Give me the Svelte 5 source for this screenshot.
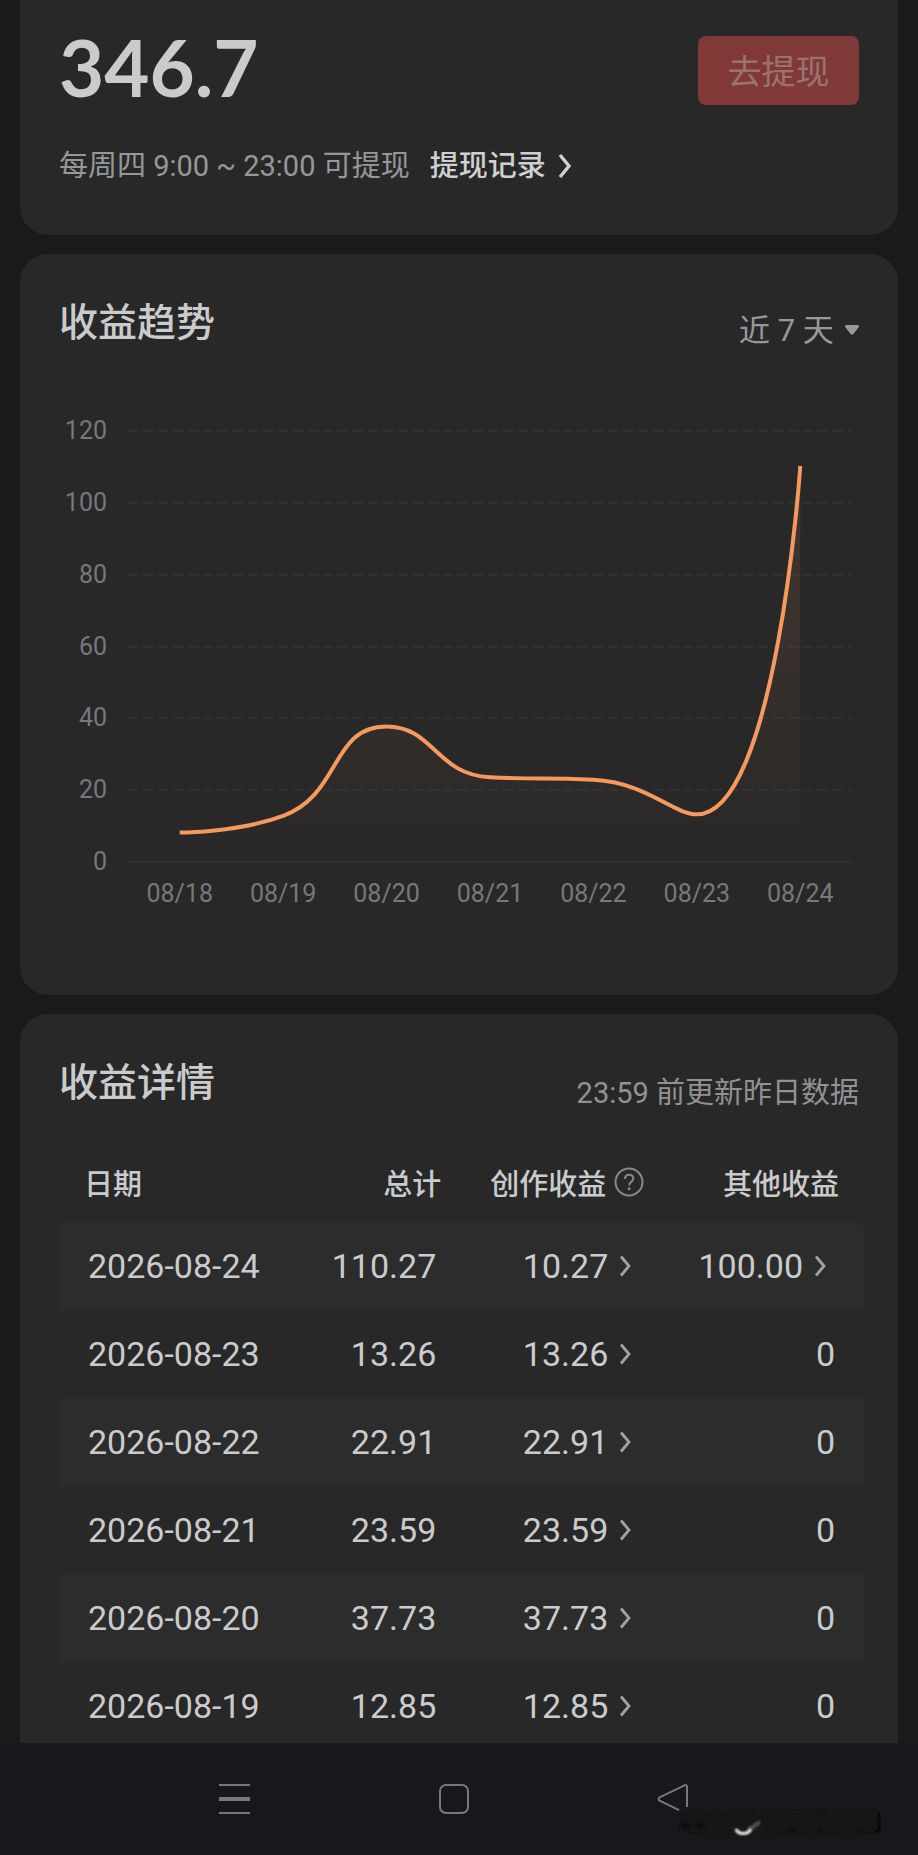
<script lang="ts">
	type Row = {
		date: string;
		total: string;
		creation: string;
		other: string;
	};

	type Point = { x: number; y: number };

	const rows: Row[] = [
		{ date: '2026-08-24', total: '110.27', creation: '10.27', other: '100.00' },
		{ date: '2026-08-23', total: '13.26', creation: '13.26', other: '0' },
		{ date: '2026-08-22', total: '22.91', creation: '22.91', other: '0' },
		{ date: '2026-08-21', total: '23.59', creation: '23.59', other: '0' },
		{ date: '2026-08-20', total: '37.73', creation: '37.73', other: '0' },
		{ date: '2026-08-19', total: '12.85', creation: '12.85', other: '0' }
	];

	const trend = [
		{ day: '08/18', value: 8.2 },
		{ day: '08/19', value: 12.85 },
		{ day: '08/20', value: 37.73 },
		{ day: '08/21', value: 23.59 },
		{ day: '08/22', value: 22.91 },
		{ day: '08/23', value: 13.26 },
		{ day: '08/24', value: 110.27 }
	];

	const ticks = [120, 100, 80, 60, 40, 20, 0];

	// Plot area inside the chart's viewBox
	const left = 69;
	const right = 793;
	const top = 32;
	const bottom = 463;
	const band = (right - left) / trend.length;

	let range = $state('7');

	function yOf(value: number) {
		return bottom - (value / 120) * (bottom - top);
	}

	const points: Point[] = trend.map((d, i) => ({
		x: left + band * (i + 0.5),
		y: yOf(d.value)
	}));

	function clamp(v: number, a: number, b: number) {
		return Math.min(Math.max(v, Math.min(a, b)), Math.max(a, b));
	}

	// Bezier through all points, control points never overshoot their neighbours
	function smoothPath(pts: Point[], smooth = 0.5) {
		let d = `M${pts[0].x} ${pts[0].y}`;
		let out = pts[0];

		for (let i = 1; i < pts.length; i++) {
			const prev = pts[i - 1];
			const p = pts[i];
			const next = pts[i + 1];
			let into = p;
			let nextOut = p;

			if (next) {
				const lenPrev = Math.hypot(p.x - prev.x, p.y - prev.y);
				const lenNext = Math.hypot(next.x - p.x, next.y - p.y);
				const ratio = lenNext / (lenPrev + lenNext);

				nextOut = {
					x: clamp(p.x + (next.x - prev.x) * smooth * ratio, p.x, next.x),
					y: clamp(p.y + (next.y - prev.y) * smooth * ratio, p.y, next.y)
				};
				into = {
					x: clamp(p.x - ((nextOut.x - p.x) * lenPrev) / lenNext, prev.x, p.x),
					y: clamp(p.y - ((nextOut.y - p.y) * lenPrev) / lenNext, prev.y, p.y)
				};
				nextOut = {
					x: p.x + ((p.x - into.x) * lenNext) / lenPrev,
					y: p.y + ((p.y - into.y) * lenNext) / lenPrev
				};
			}

			d += ` C${out.x} ${out.y} ${into.x} ${into.y} ${p.x} ${p.y}`;
			out = nextOut;
		}

		return d;
	}

	const line = smoothPath(points);
	const area = `${line} V${bottom} H${points[0].x} Z`;
</script>

{#snippet amount(value: string)}
	<a class="amount" href="#detail">
		{value}
		<svg width="12" height="24" viewBox="0 0 12 24" fill="none" aria-hidden="true">
			<path d="M2 2.500 10 12 2 21.500" stroke="#a2a2a5" stroke-width="2.800" />
		</svg>
	</a>
{/snippet}

<div class="screen">
	<main>
		<section class="card balance">
			<div class="balance-row">
				<strong>346.7</strong>
				<button class="withdraw" disabled>去提现</button>
			</div>
			<p>
				每周四 9:00 ~ 23:00 可提现
				<a href="#records">
					提现记录
					<svg width="14" height="26" viewBox="0 0 14 26" fill="none" aria-hidden="true">
						<path d="M2 2 11 13 2 24" stroke="#cfd0d2" stroke-width="3.400" />
					</svg>
				</a>
			</p>
		</section>

		<section class="card trend">
			<header>
				<h2>收益趋势</h2>
				<label class="range">
					<select aria-label="收益趋势" bind:value={range}>
						<option value="7">近 7 天</option>
					</select>
					<svg width="14" height="10" viewBox="0 0 14 10" aria-hidden="true">
						<path
							d="M1.500 0h11c1.400 0 2 1.400 1 2.400L8.400 9c-.8.900-2 .9-2.800 0L.5 2.400C-.5 1.400.1 0 1.500 0z"
							fill="#98989b"
						/>
					</svg>
				</label>
			</header>

			<svg class="chart" viewBox="0 0 800 541" role="img" aria-label="收益趋势">
				<defs>
					<linearGradient id="fill" x1="0" y1="0" x2="0" y2="1">
						<stop offset="0" stop-color="#ff9a5c" stop-opacity="0.13" />
						<stop offset="1" stop-color="#ff9a5c" stop-opacity="0" />
					</linearGradient>
				</defs>
				{#each ticks as tick}
					<line
						class="grid"
						class:dashed={tick > 0}
						x1={left}
						x2={right}
						y1={Math.round(yOf(tick))}
						y2={Math.round(yOf(tick))}
					/>
					<text x="48" y={Math.round(yOf(tick)) + 8} text-anchor="end">{tick}</text>
				{/each}
				{#each trend as item, i}
					<text x={points[i].x} y="503" text-anchor="middle">{item.day}</text>
				{/each}
				<path d={area} fill="url(#fill)" />
				<path d={line} fill="none" stroke="#f5995f" stroke-width="4" />
			</svg>
		</section>

		<section class="card details">
			<header>
				<h2>收益详情</h2>
				<span class="note">23:59 前更新昨日数据</span>
			</header>

			<table>
				<thead>
					<tr>
						<th>日期</th>
						<th>总计</th>
						<th>
							<span class="with-help">
								创作收益
								<svg width="30" height="30" viewBox="0 0 30 30" fill="none" aria-hidden="true">
									<circle cx="15" cy="15" r="13.500" stroke="#88888b" stroke-width="2" />
									<path
										d="M11 12c0-2.600 1.700-4.200 4.200-4.200s4.100 1.600 4.100 3.800c0 3-4.100 3.400-4.100 6.800"
										stroke="#88888b"
										stroke-width="2"
									/>
									<circle cx="15.200" cy="21.700" r="1.500" fill="#88888b" />
								</svg>
							</span>
						</th>
						<th>其他收益</th>
					</tr>
				</thead>
				<tbody>
					{#each rows as row}
						<tr>
							<td>{row.date}</td>
							<td>{row.total}</td>
							<td>{@render amount(row.creation)}</td>
							<td class:linked={row.other !== '0'}>
								{#if row.other === '0'}
									0
								{:else}
									{@render amount(row.other)}
								{/if}
							</td>
						</tr>
					{/each}
				</tbody>
			</table>
		</section>
	</main>

	<nav>
		<button aria-label="菜单">
			<svg width="32" height="32" viewBox="0 0 32 32" fill="none" stroke="#77787b">
				<path d="M0 2h31M0 30h31" stroke-width="2" />
				<path d="M0 16h31" stroke-width="4" />
			</svg>
		</button>
		<button aria-label="主页">
			<svg width="32" height="32" viewBox="0 0 32 32" fill="none" stroke="#77787b">
				<rect x="2" y="2" width="28" height="28" rx="6" stroke-width="2" />
			</svg>
		</button>
		<button aria-label="返回">
			<svg width="32" height="32" viewBox="0 0 32 32" fill="none" stroke="#77787b">
				<path
					d="M22 27.200 2.600 17.600c-1.400-.8-1.400-2.400 0-3.200L27.500 2.300c1.500-.6 2.500 0 2.500 1.500V24"
					stroke-width="2"
				/>
			</svg>
		</button>
		<svg class="smudge" width="212" height="36" viewBox="0 0 212 36" aria-hidden="true">
			<defs>
				<filter id="soft" x="-20%" y="-50%" width="140%" height="200%">
					<feGaussianBlur stdDeviation="2" />
				</filter>
				<filter id="softer" x="-50%" y="-50%" width="200%" height="200%">
					<feGaussianBlur stdDeviation="0.8" />
				</filter>
			</defs>
			<path d="M6 12 60 8 200 6v20l-90 2-100-2z" fill="#141517" filter="url(#soft)" />
			<path
				d="M4 18h10v6H4zM20 18h8v5h-8zM112 24h8v4h-8zM131 24h2v4h-2zM143 23h2v4h-2zM182 22l5 5h-5z"
				fill="#0d0e0f"
				filter="url(#softer)"
			/>
			<path d="M3 5h8" stroke="#4a4b4e" stroke-width="4" filter="url(#soft)" />
			<path d="M203 8v18h-4" fill="none" stroke="#08090a" stroke-width="3" />
			<path d="M72 24c6-1 8-5 12-7" fill="none" stroke="#505255" stroke-width="4" filter="url(#softer)" />
			<path d="M60 24c2 6 12 6 15 0" fill="none" stroke="#f0f0f0" stroke-width="3" filter="url(#softer)" />
		</svg>
	</nav>
</div>

<style>
	:global(body) {
		margin: 0;
		background: #1a1a1a;
	}

	.screen {
		display: flex;
		flex-direction: column;
		height: 100vh;
		background: #1a1a1a;
		color: #cacbcd;
		font-family: Roboto, 'Noto Sans CJK SC', sans-serif;
		font-size: 29px;
	}

	main {
		flex: 1;
		min-height: 0;
		overflow: hidden auto;
		scrollbar-width: none;
		padding: 0 20px;
	}

	a {
		color: inherit;
		text-decoration: none;
	}

	.card {
		margin-bottom: 19px;
		padding: 40px 39px 0;
		border-radius: 28px;
		background: #282828;
	}

	.balance {
		padding: 36px 39px 49px;
		border-radius: 0 0 28px 28px;
	}

	.balance-row {
		display: flex;
		align-items: flex-start;
		justify-content: space-between;
	}

	.balance strong {
		font-family: Lato, sans-serif;
		font-size: 78px;
		font-weight: 700;
		line-height: 62px;
	}

	.withdraw {
		width: 161px;
		height: 69px;
		padding: 0 0 2px;
		border: 0;
		border-radius: 8px;
		background: #803937;
		color: #997370;
		font: inherit;
		font-size: 34px;
	}

	.balance p {
		display: flex;
		gap: 20px;
		margin: 41px 0 0;
		color: #97979a;
		line-height: 40px;
	}

	.balance p a {
		display: flex;
		align-items: center;
		gap: 12px;
		color: #cfd0d2;
		font-weight: 500;
	}

	header {
		display: flex;
		align-items: flex-end;
		justify-content: space-between;
	}

	h2 {
		margin: 0;
		font-size: 39px;
		font-weight: 500;
		line-height: 58px;
	}

	.range {
		display: flex;
		align-items: center;
		gap: 11px;
	}

	.range select {
		appearance: none;
		height: 44px;
		padding: 0;
		border: 0;
		background: none;
		color: #98989b;
		font: inherit;
		font-size: 31px;
	}

	.note {
		color: #929295;
		line-height: 38px;
	}

	.chart {
		display: block;
		width: 100%;
		margin-top: 47px;
		padding-bottom: 55px;
	}

	.chart text {
		fill: #77787b;
		font-size: 25px;
	}

	.grid {
		stroke: #303031;
		stroke-width: 2;
	}

	.dashed {
		stroke-dasharray: 10 5;
	}

	.details {
		margin-bottom: 0;
		padding-right: 34px;
		border-radius: 28px 28px 0 0;
	}

	.details header {
		margin-right: 5px;
	}

	table {
		width: 100%;
		margin-top: 32px;
		border-spacing: 0;
		table-layout: fixed;
		text-align: right;
	}

	th {
		height: 75px;
		padding: 0 0 3px;
		font-weight: 500;
		white-space: nowrap;
	}

	th:first-child {
		width: 25%;
		box-sizing: border-box;
		padding-left: 25px;
		text-align: left;
	}

	th:nth-child(2) {
		width: 181px;
	}

	th:nth-child(3) {
		width: 203px;
	}

	th:last-child {
		padding-right: 25px;
	}

	.with-help {
		display: flex;
		align-items: center;
		justify-content: flex-end;
		gap: 8px;
	}

	td {
		height: 88px;
		padding: 0;
		font-size: 34px;
	}

	td:first-child {
		padding-left: 29px;
		text-align: left;
	}

	td:nth-child(2) {
		padding-right: 5px;
	}

	td:nth-child(3) {
		padding-right: 13px;
	}

	td:last-child {
		padding-right: 29px;
	}

	td.linked:last-child {
		padding-right: 38px;
	}

	tbody tr:nth-child(odd) td {
		background: #2c2c2c;
	}

	tbody tr:first-child td:first-child {
		border-top-left-radius: 8px;
	}

	tbody tr:first-child td:last-child {
		border-top-right-radius: 8px;
	}

	.amount {
		display: flex;
		align-items: center;
		justify-content: flex-end;
		gap: 11px;
	}

	nav {
		position: relative;
		display: grid;
		grid-template-columns: repeat(3, 1fr);
		height: 112px;
		padding: 0 135px 0 125px;
		background: #17181c;
	}

	nav button {
		display: flex;
		align-items: center;
		justify-content: center;
		padding: 0;
		border: 0;
		background: none;
	}

	.smudge {
		position: absolute;
		right: 30px;
		bottom: 14px;
	}
</style>
